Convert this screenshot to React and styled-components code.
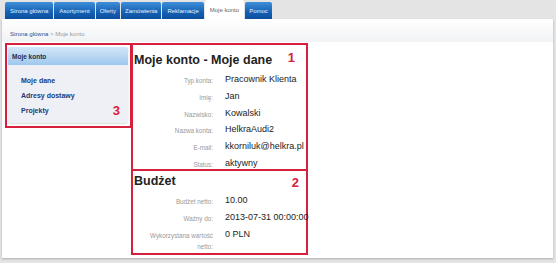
import styled, { createGlobalStyle } from "styled-components";

const Global = createGlobalStyle`
  html, body { margin: 0; padding: 0; }
  body { background: #e4e4e4; font-family: "Liberation Sans", Arial, sans-serif; }
  * { box-sizing: border-box; }
`;

const Page = styled.div`
  width: 556px;
  height: 263px;
  background: #e4e4e4;
  overflow: hidden;
`;

const TabBar = styled.div`
  display: flex;
  align-items: flex-end;
  gap: 1px;
  height: 19px;
  padding-left: 5px;
`;

const Tab = styled.div`
  height: ${(p) => (p.$active ? "19px" : "17px")};
  padding: 0 ${(p) => p.$pad || 5}px;
  display: flex;
  align-items: center;
  font-size: 6px;
  color: ${(p) => (p.$active ? "#666" : "#e8f0fa")};
  background: ${(p) =>
    p.$active ? "#fff" : "linear-gradient(#3f8fd8, #1460b4 60%, #0c4f9c)"};
  border-radius: 2px 2px 0 0;
  white-space: nowrap;
`;

const Panel = styled.div`
  margin: 0 3px 0 2px;
  height: 239px;
  background: #fff;
  box-shadow: 0 1px 2px rgba(0, 0, 0, 0.25);
  display: flex;
  flex-direction: column;
`;

const Crumbs = styled.div`
  height: 23px;
  padding: 12px 0 0 8px;
  font-size: 6px;
  color: #999;
  background: linear-gradient(#fff, #f1f2f5);
  a { color: #2a4f96; }
`;

const Content = styled.div`
  display: flex;
  align-items: flex-start;
  padding: 1px 0 0 3px;
`;

const Marked = styled.div`
  position: relative;
  border: 2px solid #d6203c;
  width: ${(p) => p.$w}px;
  height: ${(p) => p.$h}px;
  margin-top: ${(p) => p.$mt || 0}px;
`;

const Mark = styled.span`
  position: absolute;
  right: ${(p) => p.$r}px;
  top: ${(p) => p.$t}px;
  color: #d6203c;
  font-size: 13px;
  font-weight: bold;
`;

const SideCard = styled.div`
  margin: 2px 2px 0 1px;
  height: 76px;
  background: #eef0f5;
  border-radius: 2px;
  box-shadow: 0 1px 2px rgba(0, 0, 0, 0.15);
`;

const SideHead = styled.div`
  height: 18px;
  display: flex;
  align-items: center;
  padding-left: 4px;
  font-size: 6.5px;
  font-weight: bold;
  color: #1d2b4f;
  background: linear-gradient(#d4e6f8, #9ec8ee);
  border-radius: 2px 2px 0 0;
`;

const SideList = styled.div`
  display: flex;
  flex-direction: column;
  gap: 7px;
  padding: 12px 0 0 13px;
`;

const SideLink = styled.div`
  font-size: 7px;
  line-height: 8px;
  font-weight: bold;
  color: #1c3a78;
`;

const MainCol = styled.div`
  display: flex;
  flex-direction: column;
  margin-left: -1px;
`;

const Title = styled.div`
  font-size: 12.5px;
  font-weight: bold;
  color: #222;
  padding: ${(p) => p.$pt}px 0 0 1px;
  height: ${(p) => p.$h}px;
`;

const Row = styled.div`
  display: grid;
  grid-template-columns: 80px 1fr;
  column-gap: 12px;
  align-items: start;
  height: 16.8px;
`;

const Label = styled.div`
  font-size: 6.3px;
  color: #999;
  text-align: right;
  padding: 2px 0 0 6px;
  line-height: 11px;
`;

const Value = styled.div`
  font-size: 9px;
  line-height: 13px;
  color: #222;
  white-space: nowrap;
`;

const Field = ({ label, value }) => (
  <Row>
    <Label>{label}</Label>
    <Value>{value}</Value>
  </Row>
);

export default function App() {
  return (
    <Page>
      <Global />
      <TabBar>
        <Tab>Strona główna</Tab>
        <Tab>Asortyment</Tab>
        <Tab $pad={4}>Oferty</Tab>
        <Tab $pad={4}>Zamówienia</Tab>
        <Tab>Reklamacje</Tab>
        <Tab $active>Moje konto</Tab>
        <Tab $pad={4}>Pomoc</Tab>
      </TabBar>
      <Panel>
        <Crumbs>
          <a>Strona główna</a> &gt; Moje konto
        </Crumbs>
        <Content>
          <Marked $w={127} $h={85}>
            <SideCard>
              <SideHead>Moje konto</SideHead>
              <SideList>
                <SideLink>Moje dane</SideLink>
                <SideLink>Adresy dostawy</SideLink>
                <SideLink>Projekty</SideLink>
              </SideList>
            </SideCard>
            <Mark $r={10} $t={58}>3</Mark>
          </Marked>
          <MainCol>
            <Marked $w={177} $h={128}>
              <Title $pt={8} $h={28}>Moje konto - Moje dane</Title>
              <Field label="Typ konta:" value="Pracownik Klienta" />
              <Field label="Imię:" value="Jan" />
              <Field label="Nazwisko:" value="Kowalski" />
              <Field label="Nazwa konta:" value="HelkraAudi2" />
              <Field label="E-mail:" value="kkorniluk@helkra.pl" />
              <Field label="Status:" value="aktywny" />
              <Mark $r={11} $t={5}>1</Mark>
            </Marked>
            <Marked $w={177} $h={86} $mt={-2}>
              <Title $pt={3} $h={23}>Budżet</Title>
              <Field label="Budżet netto:" value="10.00" />
              <Field label="Ważny do:" value="2013-07-31 00:00:00" />
              <Field label="Wykorzystana wartość netto:" value="0 PLN" />
              <Mark $r={7} $t={4}>2</Mark>
            </Marked>
          </MainCol>
        </Content>
      </Panel>
    </Page>
  );
}
